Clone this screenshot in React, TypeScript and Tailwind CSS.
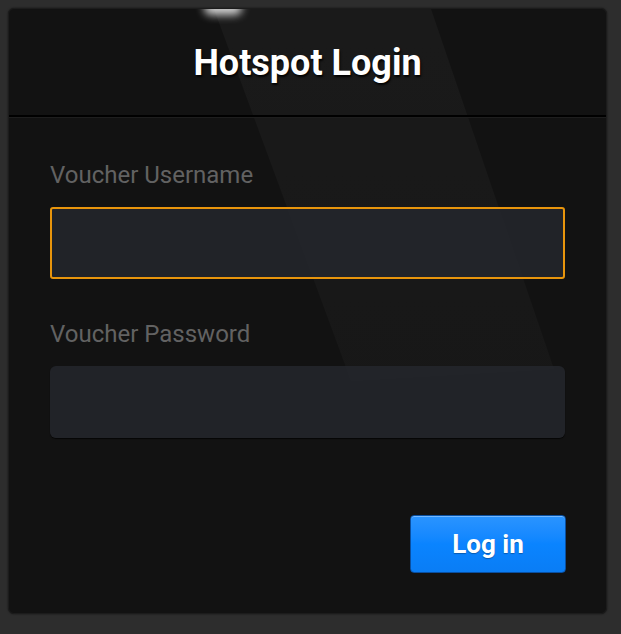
export default function App() {
  return (
    <div className="min-h-[634px] bg-[#2d2d2d] p-2 font-['Roboto',sans-serif]">
      <div className="relative h-[606px] w-[599px] overflow-hidden rounded-md border border-[#1c1c1c] bg-[#121212] shadow-[0_0_2px_rgba(0,0,0,0.6)]">
        {/* light beam */}
        <div
          className="pointer-events-none absolute inset-0 bg-gradient-to-b from-white/[0.035] to-white/[0.015]"
          style={{ clipPath: "polygon(205px 0, 422px 0, 545px 360px, 342px 372px)" }}
        ></div>
        {/* glow spot at top */}
        <div className="pointer-events-none absolute left-[195px] top-[-8px] h-[14px] w-[38px] rounded-full bg-white/80 blur-[4px]"></div>

        <div className="relative flex h-[108px] items-center justify-center border-b-2 border-black pt-[2px]">
          <h1 className="text-[36px] font-bold leading-none text-white [text-shadow:1px_2px_2px_rgba(0,0,0,0.9)]">
            Hotspot Login
          </h1>
        </div>
        <div className="relative h-px bg-[#1e1e1e]"></div>

        <div className="relative px-[41px] pt-[45px]">
          <label className="block text-[24px] leading-none text-[#626262]">Voucher Username</label>
          <div className="mt-[20px] h-[72px] rounded-[3px] border-2 border-[#e8950c] bg-[#24262b]/90"></div>

          <label className="mt-[43px] block text-[24px] leading-none text-[#626262]">Voucher Password</label>
          <div className="mt-[20px] h-[72px] rounded-md bg-[#24262b]/90 shadow-[0_1px_1px_rgba(0,0,0,0.7)]"></div>

          <div className="mt-[77px] flex justify-end">
            <button className="mr-[-1px] h-[58px] w-[156px] rounded-[4px] border border-[#0a4fa0] bg-gradient-to-b from-[#2a94ff] via-[#0a84ff] to-[#0a7df5] text-[26px] font-bold text-white shadow-[inset_0_1px_0_rgba(255,255,255,0.35)] [text-shadow:0_1px_1px_rgba(0,0,0,0.3)]">
              Log in
            </button>
          </div>
        </div>
      </div>
    </div>
  )
}
